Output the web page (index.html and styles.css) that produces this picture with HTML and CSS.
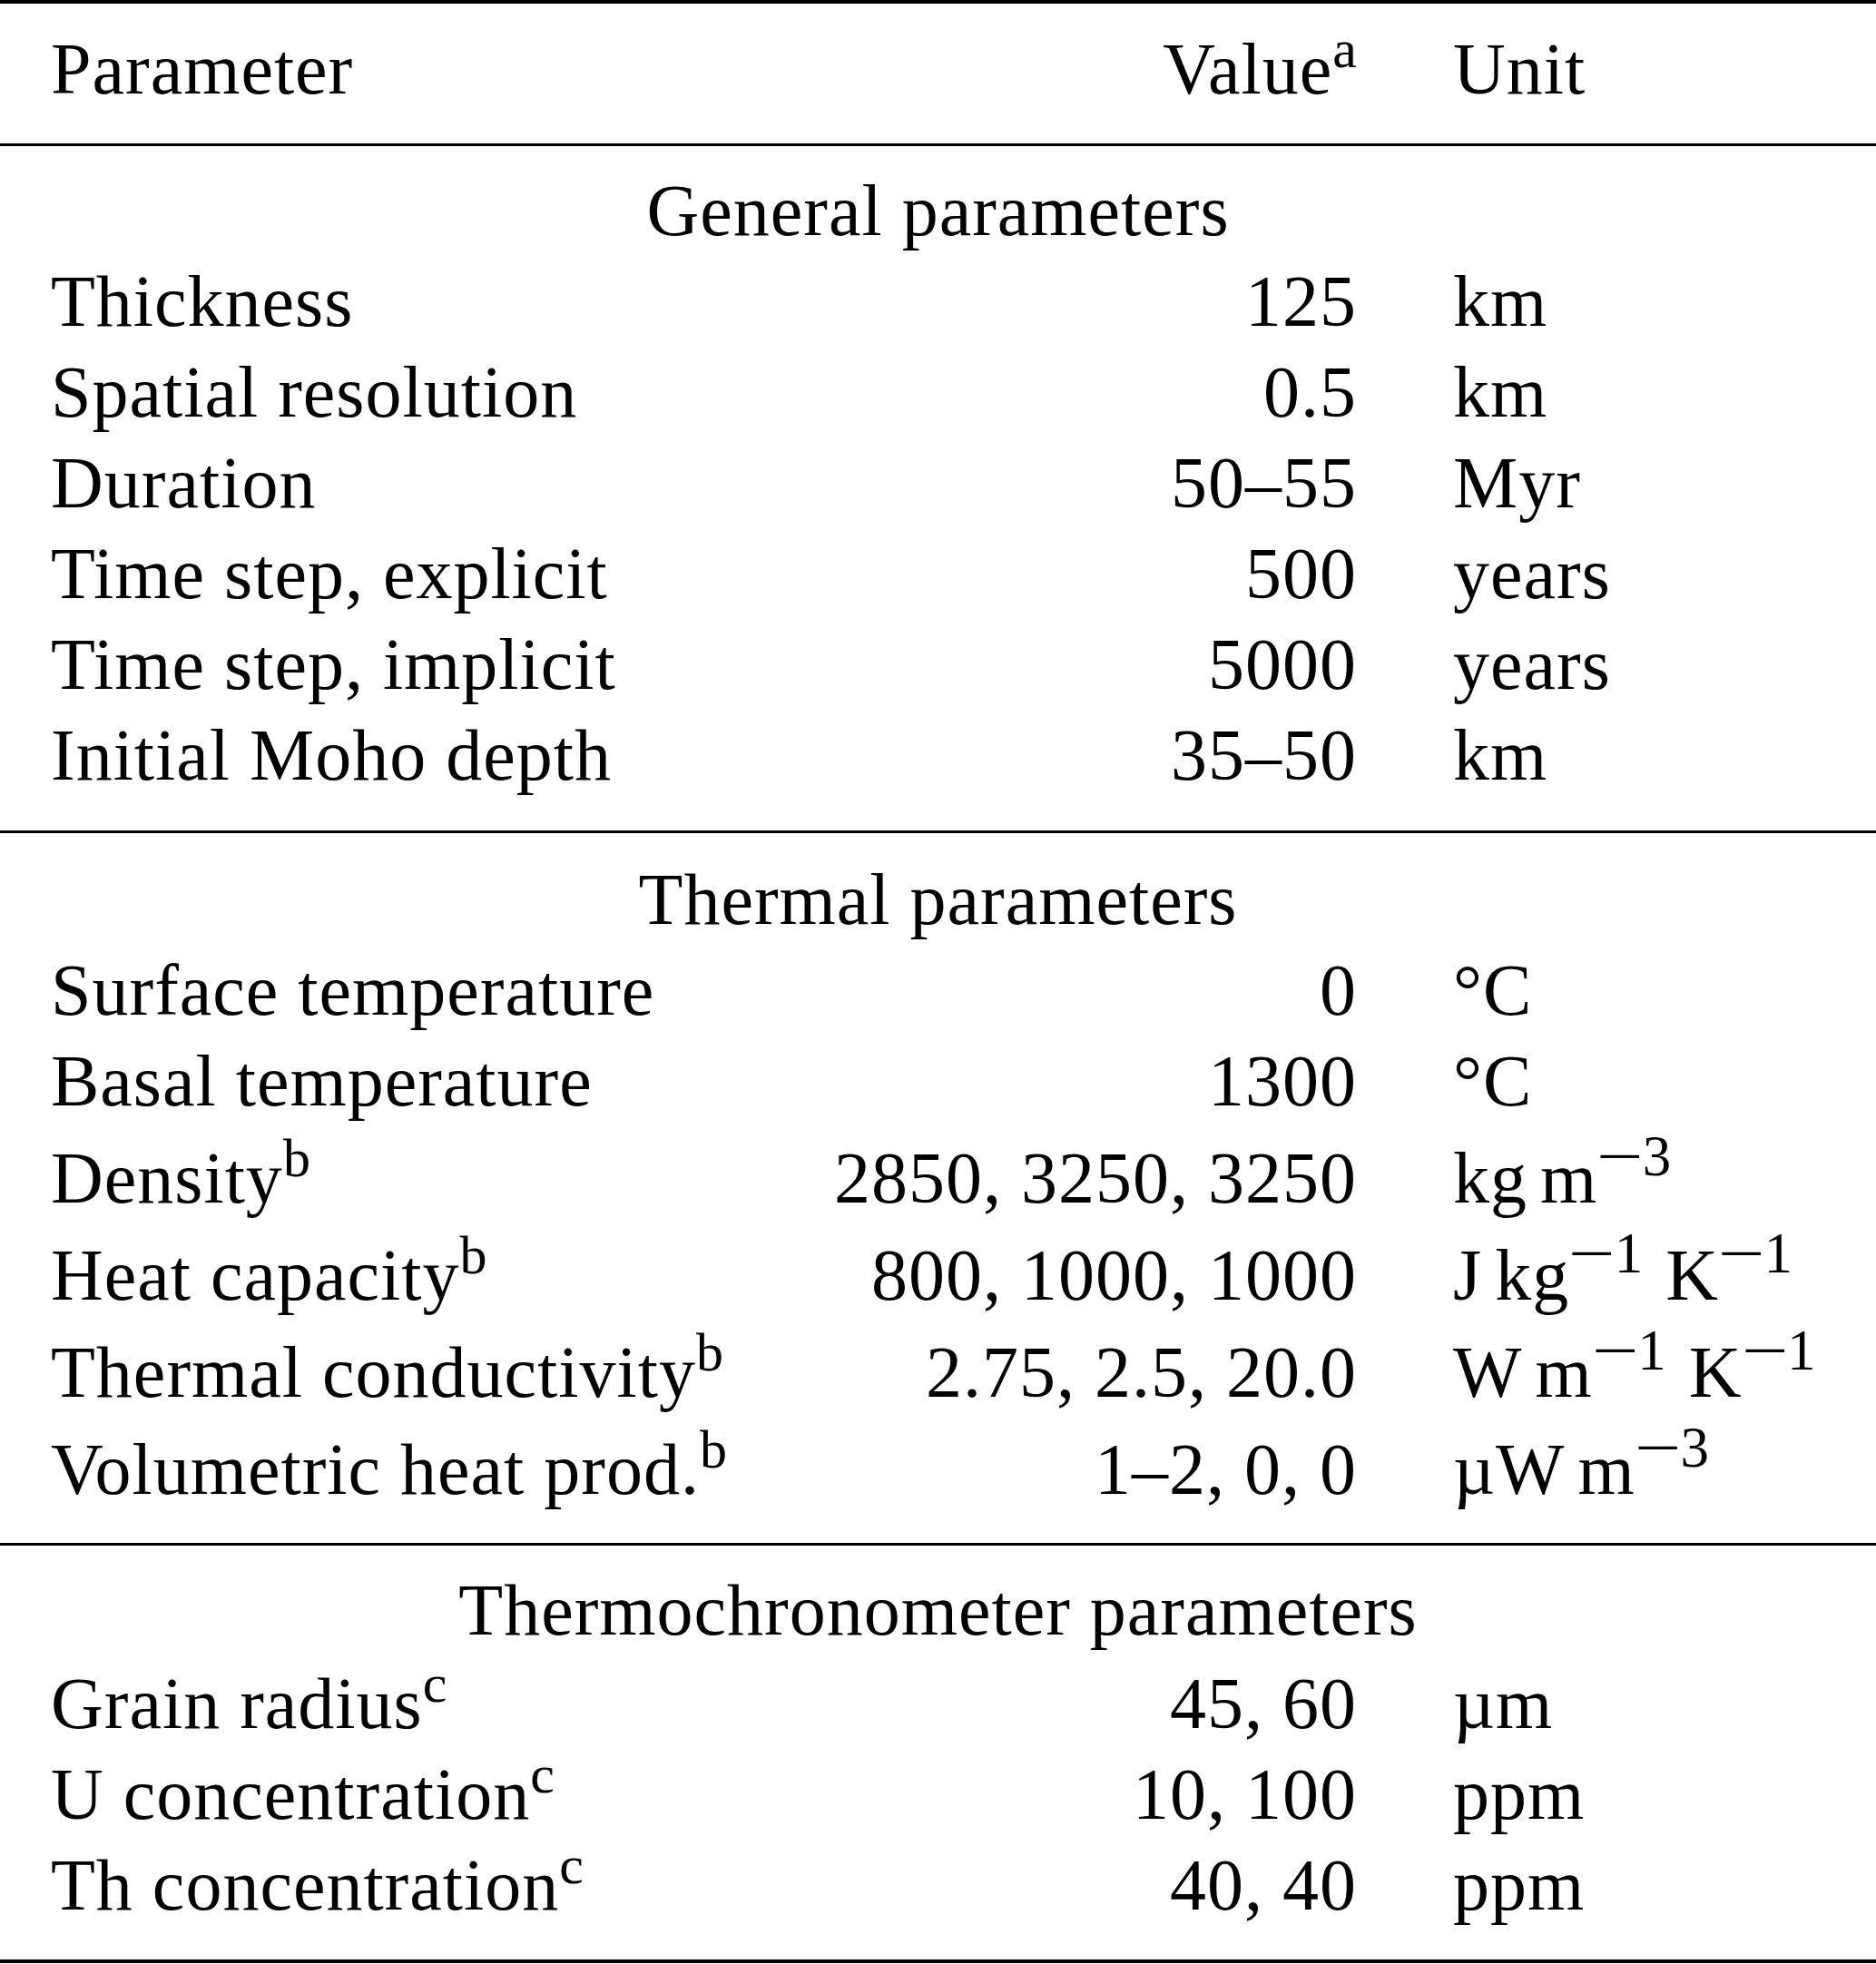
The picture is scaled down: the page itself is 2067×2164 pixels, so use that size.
FILE: index.html
```html
<!DOCTYPE html>
<html lang="en">
<head>
<meta charset="utf-8">
<title>Model parameters</title>
<link rel="stylesheet" href="styles.css">
</head>
<body>
<div class="ptable">
  <div class="block head">
    <div class="row">
      <div class="c-param">Parameter</div>
      <div class="c-value">Value<sup class="fn">a</sup></div>
      <div class="c-unit">Unit</div>
    </div>
  </div>

  <div class="block sec1">
    <div class="title">General parameters</div>
    <div class="row"><div class="c-param">Thickness</div><div class="c-value">125</div><div class="c-unit">km</div></div>
    <div class="row"><div class="c-param">Spatial resolution</div><div class="c-value">0.5</div><div class="c-unit">km</div></div>
    <div class="row"><div class="c-param">Duration</div><div class="c-value">50–55</div><div class="c-unit">Myr</div></div>
    <div class="row"><div class="c-param">Time step, explicit</div><div class="c-value">500</div><div class="c-unit">years</div></div>
    <div class="row"><div class="c-param">Time step, implicit</div><div class="c-value">5000</div><div class="c-unit">years</div></div>
    <div class="row"><div class="c-param">Initial Moho depth</div><div class="c-value">35–50</div><div class="c-unit">km</div></div>
  </div>

  <div class="block sec2">
    <div class="title">Thermal parameters</div>
    <div class="row"><div class="c-param">Surface temperature</div><div class="c-value">0</div><div class="c-unit">°C</div></div>
    <div class="row"><div class="c-param">Basal temperature</div><div class="c-value">1300</div><div class="c-unit">°C</div></div>
    <div class="row row-sup"><div class="c-param">Density<sup class="fn">b</sup></div><div class="c-value">2850, 3250, 3250</div><div class="c-unit">kg<span class="th"></span>m<sup class="ex"><span class="mn">−</span>3</sup></div></div>
    <div class="row row-sup"><div class="c-param">Heat capacity<sup class="fn">b</sup></div><div class="c-value">800, 1000, 1000</div><div class="c-unit">J<span class="th"></span>kg<sup class="ex"><span class="mn">−</span>1</sup><span class="th"></span>K<sup class="ex"><span class="mn">−</span>1</sup></div></div>
    <div class="row row-sup"><div class="c-param">Thermal conductivity<sup class="fn">b</sup></div><div class="c-value">2.75, 2.5, 20.0</div><div class="c-unit">W<span class="th"></span>m<sup class="ex"><span class="mn">−</span>1</sup><span class="th"></span>K<sup class="ex"><span class="mn">−</span>1</sup></div></div>
    <div class="row row-sup"><div class="c-param">Volumetric heat prod.<sup class="fn">b</sup></div><div class="c-value">1–2, 0, 0</div><div class="c-unit">µW<span class="th"></span>m<sup class="ex"><span class="mn">−</span>3</sup></div></div>
  </div>

  <div class="block sec3">
    <div class="title">Thermochronometer parameters</div>
    <div class="row row-sup-sm"><div class="c-param">Grain radius<sup class="fn">c</sup></div><div class="c-value">45, 60</div><div class="c-unit">µm</div></div>
    <div class="row"><div class="c-param">U concentration<sup class="fn">c</sup></div><div class="c-value">10, 100</div><div class="c-unit">ppm</div></div>
    <div class="row"><div class="c-param">Th concentration<sup class="fn">c</sup></div><div class="c-value">40, 40</div><div class="c-unit">ppm</div></div>
  </div>
</div>
</body>
</html>
```

FILE: styles.css
```css
html, body {
  margin: 0;
  padding: 0;
  background: #ffffff;
}

body {
  font-family: "Liberation Serif", "Times New Roman", serif;
  font-size: 80px;
  letter-spacing: 1px;
  color: #000000;
}

.ptable {
  width: 2067px;
  border-top: 4px solid #000000;
  border-bottom: 4px solid #000000;
}

.block {
  border-bottom: 3px solid #000000;
}

.block:last-child {
  border-bottom: none;
}

.head {
  padding: 22px 0 31px;
}

.head .row {
  line-height: 101px;
}

.sec1 {
  padding: 21px 0 33px;
}

.sec2 {
  padding: 23px 0 31px;
}

.sec3 {
  padding: 21px 0 32px;
}

.title {
  line-height: 100px;
  text-align: center;
  white-space: nowrap;
}

.row {
  display: grid;
  grid-template-columns: 794px 640px 1fr;
  padding-left: 56px;
  line-height: 100px;
  white-space: nowrap;
}

.row-sup {
  padding-top: 7px;
}

.row-sup-sm {
  padding-top: 3px;
}

.c-value {
  text-align: right;
  margin-right: -5px;
}

.c-unit {
  padding-left: 111px;
}

sup {
  line-height: 0;
  letter-spacing: 0;
}

.fn {
  font-size: 60px;
  vertical-align: 29px;
}

.ex {
  font-size: 63px;
  vertical-align: 30px;
  margin-right: 11px;
}

.mn {
  display: inline-block;
  transform: scaleX(1.45);
  margin: 0 7px 0 7px;
}

.th {
  display: inline-block;
  width: 14px;
}
```
